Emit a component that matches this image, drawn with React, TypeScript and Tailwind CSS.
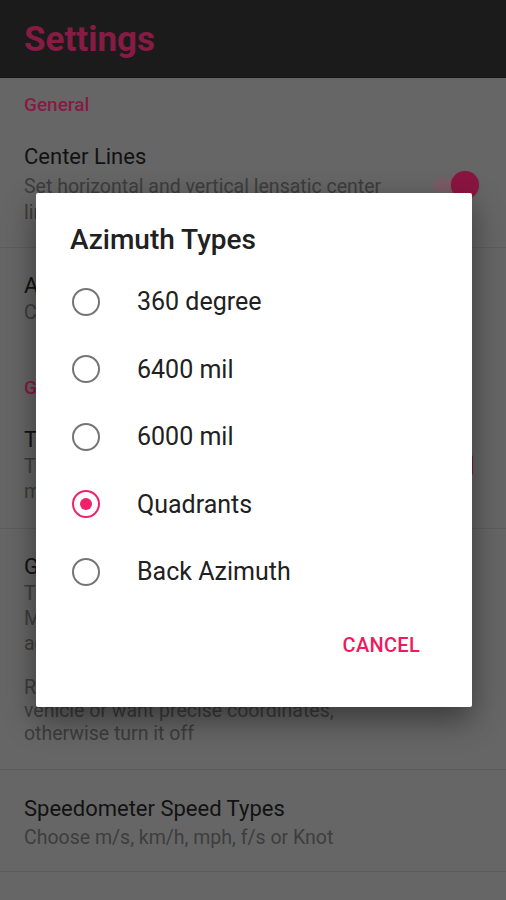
import React from "react";

const options = ["360 degree", "6400 mil", "6000 mil", "Quadrants", "Back Azimuth"];

const Radio = ({ checked }: { checked: boolean }) =>
  checked ? (
    <span className="flex h-[28px] w-[28px] items-center justify-center rounded-full border-[2.5px] border-[#f0206a]">
      <span className="h-[12px] w-[12px] rounded-full bg-[#f0206a]" />
    </span>
  ) : (
    <span className="h-[28px] w-[28px] rounded-full border-[2.5px] border-[#757575]" />
  );

const Title = ({ children }: { children: React.ReactNode }) => (
  <div className="whitespace-nowrap text-[22px] leading-[28px] text-[#121212]">{children}</div>
);

const Sub = ({ children, lead = "leading-[25px]" }: { children: React.ReactNode; lead?: string }) => (
  <div className={`whitespace-nowrap text-[19.5px] text-[#3d3d3d] ${lead}`}>{children}</div>
);

export default function App() {
  const selected = "Quadrants";

  return (
    <div className="relative h-[900px] w-[506px] overflow-hidden bg-[#666666] font-[Roboto,sans-serif]">
      {/* app bar */}
      <div className="flex h-[78px] items-center border-b border-[#151515] bg-[#1b1b1b] px-6 pt-[4px]">
        <h1 className="text-[35px] font-bold text-[#861b44]">Settings</h1>
      </div>

      {/* preference list, dimmed */}
      <div className="px-6 pt-[15px] text-[19px] font-medium leading-[24px] text-[#861b44]">General</div>

      <div className="flex items-center border-b border-[#5c5c5c] pt-[26px] pb-[21px]">
        <div className="w-[409px] pl-6">
          <Title>Center Lines</Title>
          <div className="mt-[3px] text-[19.5px] leading-[26px] text-[#3d3d3d]">
            Set horizontal and vertical lensatic center
            <br />
            lines
          </div>
        </div>
        <div className="relative ml-auto mr-[27px] h-[28px] w-[46px]">
          <div className="absolute left-0 top-[7px] h-[14px] w-[36px] rounded-full bg-[#7a5d67]" />
          <div className="absolute right-0 top-0 h-[28px] w-[28px] rounded-full bg-[#8a1540] shadow" />
        </div>
      </div>

      <div className="pt-[24px] pl-6">
        <Title>Azimuth Types</Title>
        <Sub>Choose 360 degree, 6400 mil, 6000 mil</Sub>
      </div>

      <div className="px-6 pt-[51px] text-[19px] font-medium leading-[24px] text-[#861b44]">GPS</div>

      <div className="flex items-center border-b border-[#5c5c5c] pt-[26px] pb-[24px]">
        <div className="w-[409px] pl-6">
          <Title>Track Location</Title>
          <Sub>
            Turn on to display your location
            <br />
            more accurately on the compass
          </Sub>
        </div>
        <div className="ml-auto mr-[33px] h-[20px] w-[20px] rounded-[2px] bg-[#8a1540]" />
      </div>

      <div className="border-b border-[#5c5c5c] pt-[24px] pb-[24px] pl-6">
        <Title>GPS High Accuracy</Title>
        <Sub>
          Turn this on to get the best location.
          <br />
          May use more battery, but gives better
          <br />
          accuracy for your position.
        </Sub>
        <div className="mt-[20px]">
          <Sub lead="leading-[23px]">
            Recommended if you are in a moving
            <br />
            vehicle or want precise coordinates,
            <br />
            otherwise turn it off
          </Sub>
        </div>
      </div>

      <div className="border-b border-[#5c5c5c] pt-[25px] pb-[21px] pl-6">
        <Title>Speedometer Speed Types</Title>
        <div className="mt-[2px]">
          <Sub>Choose m/s, km/h, mph, f/s or Knot</Sub>
        </div>
      </div>

      {/* dialog */}
      <div className="absolute left-[36px] top-[193px] flex h-[514px] w-[436px] flex-col rounded-[2px] bg-white shadow-[0_12px_32px_rgba(0,0,0,0.45)]">
        <h2 className="pt-[30px] pl-[34px] text-[28px] font-medium leading-[34px] text-[#212121]">Azimuth Types</h2>
        <div className="mt-[11px]">
          {options.map((opt) => (
            <div key={opt} className="flex h-[67.5px] items-center pl-[36px]">
              <Radio checked={opt === selected} />
              <span className="ml-[37px] text-[25px] text-[#212121]">{opt}</span>
            </div>
          ))}
        </div>
        <div className="mt-auto mb-[38px] flex justify-end pr-[52px]">
          <button className="h-[48px] text-[20px] font-medium tracking-[0.3px] text-[#f0195f]">CANCEL</button>
        </div>
      </div>
    </div>
  );
}
